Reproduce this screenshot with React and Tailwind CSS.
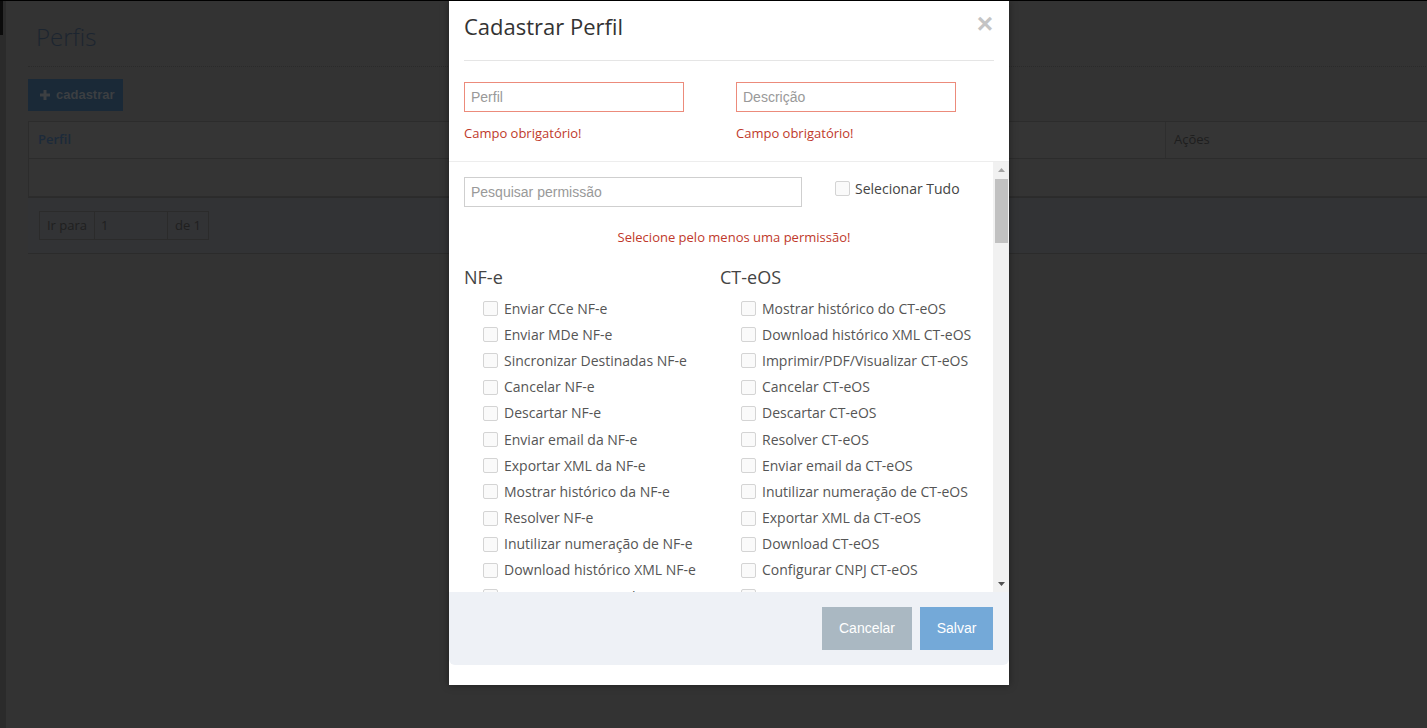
import React from "react";

const nfe = [
  "Enviar CCe NF-e",
  "Enviar MDe NF-e",
  "Sincronizar Destinadas NF-e",
  "Cancelar NF-e",
  "Descartar NF-e",
  "Enviar email da NF-e",
  "Exportar XML da NF-e",
  "Mostrar histórico da NF-e",
  "Resolver NF-e",
  "Inutilizar numeração de NF-e",
  "Download histórico XML NF-e",
  "Imprimir/PDF/Visualizar NF-e",
];

const cteos = [
  "Mostrar histórico do CT-eOS",
  "Download histórico XML CT-eOS",
  "Imprimir/PDF/Visualizar CT-eOS",
  "Cancelar CT-eOS",
  "Descartar CT-eOS",
  "Resolver CT-eOS",
  "Enviar email da CT-eOS",
  "Inutilizar numeração de CT-eOS",
  "Exportar XML da CT-eOS",
  "Download CT-eOS",
  "Configurar CNPJ CT-eOS",
  "Enviar CCe CT-eOS",
];

function Box() {
  return (
    <span className="inline-block w-[15px] h-[15px] border border-[#d4d4d4] bg-[#fafafa] rounded-[2px] shrink-0" />
  );
}

function Item({ label }) {
  return (
    <div className="flex items-center h-[26.2px] gap-[6px]">
      <Box />
      <span className="text-[14px] text-[#555] whitespace-nowrap leading-none">{label}</span>
    </div>
  );
}

export default function App() {
  return (
    <div
      className="relative w-[1427px] h-[728px] overflow-hidden bg-[#333333] flex border-t border-black"
      style={{ fontFamily: '"Open Sans", "Liberation Sans", sans-serif' }}
    >
      {/* left strip */}
      <aside className="w-[6px] shrink-0 bg-[#2b2b2b] flex flex-col">
        <div className="w-[3px] h-[34px] bg-[#0b0b0b]" />
      </aside>

      {/* dimmed page */}
      <main className="flex-1 overflow-hidden pl-[22px]">
        <div className="w-[1420px]">
          <div className="h-[66px] border-b border-dotted border-[#2a2a2a] flex items-center pl-[8px]">
            <h1 className="text-[24px] font-light text-[#1c2530] leading-none pt-[6px]">Perfis</h1>
          </div>
          <div className="flex items-center justify-between mt-[12px] h-[32px]">
            <button className="h-[32px] w-[95px] bg-[#1a2937] flex items-center gap-[6px] pl-[12px] text-[13px] font-bold text-[#3c3f42]" style={{ fontFamily: '"Liberation Sans", Arial, sans-serif' }}>
              <svg width="10" height="10" viewBox="0 0 10 10"><path d="M3.5 0h3v3.5H10v3H6.5V10h-3V6.5H0v-3h3.5z" fill="#3c3f42" /></svg>
              cadastrar
            </button>
            <div className="w-[40px] h-[32px] border border-[#262626] mr-[-33px]" />
          </div>
          <div className="mt-[10px] border border-[#2c2c2c]">
            <div className="flex h-[37px] bg-[#353535] border-b border-[#2c2c2c] text-[13px]">
              <div className="flex-1 flex items-center pl-[9px] font-semibold text-[#1c2a3a]">Perfil</div>
              <div className="w-[282px] border-l border-[#2e2e2e] flex items-center pl-[8px] text-[#1e1e1e]">Ações</div>
            </div>
            <div className="h-[37px] bg-[#343434]" />
          </div>
          <div className="h-[57px] bg-[#323335] border-t border-[#2b2b2b] border-b flex items-center pl-[11px]">
            <div className="flex h-[29px] border border-[#2b2b2b] text-[13px] text-[#1f1f1f]">
              <div className="w-[55px] flex items-center justify-center border-r border-[#2b2b2b]">Ir para</div>
              <div className="w-[73px] flex items-center pl-[6px] border-r border-[#2b2b2b]">1</div>
              <div className="w-[40px] flex items-center justify-center">de 1</div>
            </div>
          </div>
        </div>
      </main>

      {/* modal */}
      <div className="absolute left-[449px] top-0 w-[560px] h-[684px] bg-white flex flex-col shadow-[0_0_8px_rgba(0,0,0,0.4)]">
        <div className="px-[15px]">
          <div className="h-[60px] border-b border-[#e5e5e5] flex items-center justify-between">
            <h2 className="text-[22px] text-[#333] leading-none pb-[10px]">Cadastrar Perfil</h2>
            <span className="text-[28px] font-bold text-[#c4c4c4] leading-none pb-[14px] pr-[1px]" style={{ fontFamily: '"Liberation Sans", Arial, sans-serif' }}>×</span>
          </div>
        </div>
        <div className="h-[101px] border-b border-[#ededed] px-[15px] pt-[21px] flex">
          <div className="w-[272px] shrink-0">
            <div className="w-[220px] h-[30px] border border-[#ec8b7b] flex items-center pl-[6px] text-[14px] text-[#999]" style={{ fontFamily: '"Liberation Sans", Arial, sans-serif' }}>Perfil</div>
            <div className="mt-[12px] text-[13px] text-[#c0392b]">Campo obrigatório!</div>
          </div>
          <div className="shrink-0">
            <div className="w-[220px] h-[30px] border border-[#ec8b7b] flex items-center pl-[6px] text-[14px] text-[#999]" style={{ fontFamily: '"Liberation Sans", Arial, sans-serif' }}>Descrição</div>
            <div className="mt-[12px] text-[13px] text-[#c0392b]">Campo obrigatório!</div>
          </div>
        </div>

        {/* scroll area */}
        <div className="h-[430px] flex">
          <div className="flex-1 overflow-hidden pl-[15px] pt-[15px]">
            <div className="flex items-start">
              <div className="w-[338px] h-[30px] border border-[#cfcfcf] flex items-center pl-[6px] text-[14px] text-[#999]" style={{ fontFamily: '"Liberation Sans", Arial, sans-serif' }}>Pesquisar permissão</div>
              <label className="ml-[33px] mt-[1px] flex items-center gap-[5px]">
                <Box />
                <span className="text-[14px] text-[#444]">Selecionar Tudo</span>
              </label>
            </div>
            <div className="mt-[21px] text-center text-[13px] text-[#c0392b] pl-[11px]">Selecione pelo menos uma permissão!</div>
            <div className="flex mt-[20px]">
              <div className="w-[256px]">
                <h3 className="text-[18px] text-[#444] leading-none h-[20px]">NF-e</h3>
                <div className="pl-[19px] mt-[8px]">
                  {nfe.map((l) => <Item key={l} label={l} />)}
                </div>
              </div>
              <div>
                <h3 className="text-[18px] text-[#444] leading-none h-[20px]">CT-eOS</h3>
                <div className="pl-[21px] mt-[8px]">
                  {cteos.map((l) => <Item key={l} label={l} />)}
                </div>
              </div>
            </div>
          </div>
          {/* scrollbar */}
          <div className="w-[16px] bg-[#f1f1f1] flex flex-col items-center">
            <div className="h-[16px] flex items-center justify-center">
              <svg width="7" height="4" viewBox="0 0 7 4"><path d="M3.5 0L7 4H0z" fill="#a3a3a3" /></svg>
            </div>
            <div className="w-[13px] h-[64px] bg-[#c1c1c1] mt-[1px]" />
            <div className="flex-1" />
            <div className="h-[16px] flex items-center justify-center">
              <svg width="7" height="4" viewBox="0 0 7 4"><path d="M0 0h7L3.5 4z" fill="#505050" /></svg>
            </div>
          </div>
        </div>

        {/* footer */}
        <div className="h-[73px] bg-[#eef1f6] rounded-b-[6px] flex items-center justify-end gap-[8px] pr-[16px]" style={{ fontFamily: '"Liberation Sans", Arial, sans-serif' }}>
          <button className="w-[90px] h-[43px] bg-[#aab8c2] text-white text-[14px]">Cancelar</button>
          <button className="w-[73px] h-[43px] bg-[#74a9d8] text-white text-[14px]">Salvar</button>
        </div>
      </div>
    </div>
  );
}
